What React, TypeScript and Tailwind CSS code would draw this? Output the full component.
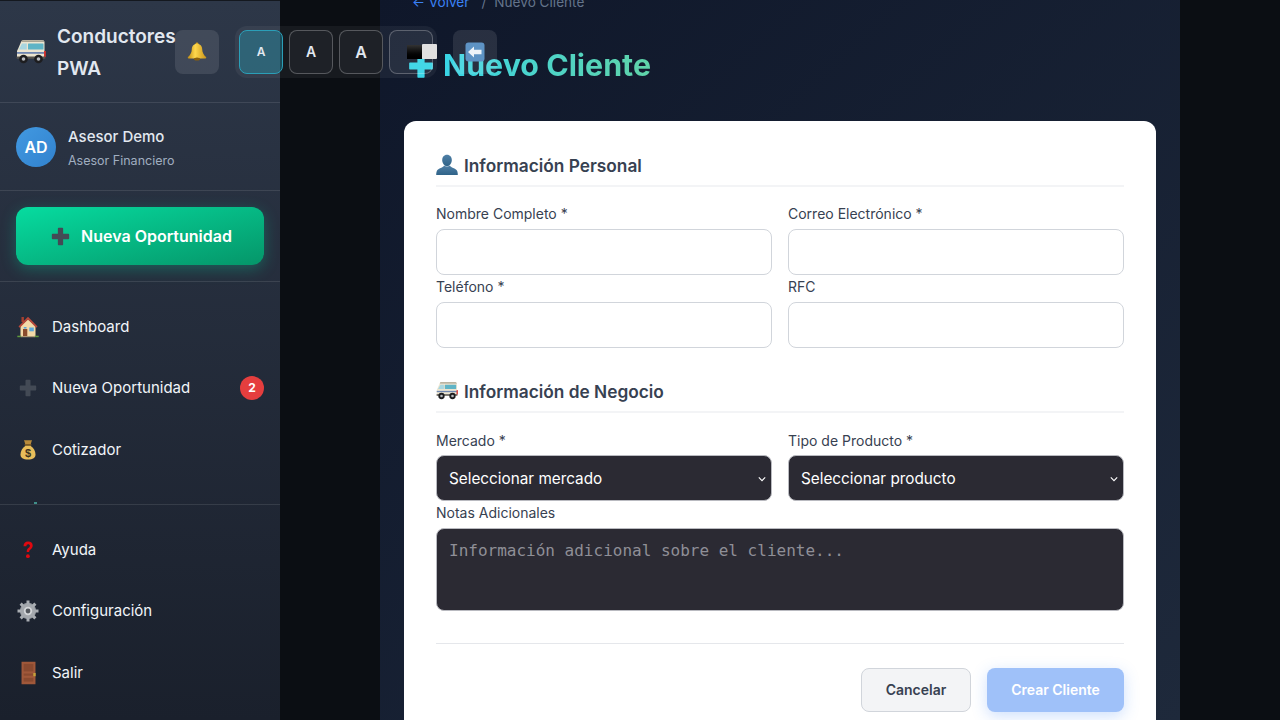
import * as React from 'react';

/* Emoji are not installed in this sandbox, so they are small inline drawings */
const VanIcon = ({ className }: { className?: string }) => (
  <svg viewBox="0 0 30 25" className={className}>
    <path d="M5 3C5.500 1.500 7 1 9 1h16.500c2 0 3 .8 3 2.500V19H1v-6.500c0-1 .4-1.800 1-2.600z" fill="#ece5d0" />
    <path d="M6 1.200h19.500c1.600 0 2.600.6 2.900 1.800H5.200c.2-1 .5-1.500.8-1.800z" fill="#a9a493" />
    <path d="M6 4.500h4.800v6H2.800z" fill="#a8d6e0" />
    <rect x="12" y="4.500" width="15.500" height="6" rx="0.600" fill="#5fb4c6" />
    <rect x="1" y="13" width="27.500" height="1.800" fill="#6f86b0" />
    <rect x="28" y="12" width="1.800" height="6" fill="#d8322d" />
    <rect x="0.500" y="17.500" width="29" height="2.200" rx="1" fill="#55534e" />
    <circle cx="7.500" cy="20" r="4.300" fill="#1d1d1f" />
    <circle cx="7.500" cy="20" r="1.800" fill="#b9bcc0" />
    <circle cx="22.500" cy="20" r="4.300" fill="#1d1d1f" />
    <circle cx="22.500" cy="20" r="1.800" fill="#b9bcc0" />
  </svg>
);

const BellIcon = ({ className }: { className?: string }) => (
  <svg viewBox="0 0 20 20" className={className}>
    <defs>
      <linearGradient id="bell" x1="0" y1="0" x2="1" y2="0">
        <stop offset="0" stopColor="#c08c14" />
        <stop offset="0.4" stopColor="#ffd84d" />
        <stop offset="1" stopColor="#c9941a" />
      </linearGradient>
    </defs>
    <circle cx="10" cy="1.800" r="1.400" fill="#d2a020" />
    <path d="M10 1.800c3.200 0 5 2.400 5.200 5.400.2 3 1 5.300 3.800 7.900.5.600.2 1.300-.6 1.300H1.600c-.8 0-1.100-.7-.6-1.300 2.800-2.600 3.600-4.900 3.800-7.900C5 4.200 6.800 1.800 10 1.800z" fill="url(#bell)" />
    <ellipse cx="10" cy="17" rx="3" ry="1.500" fill="#8a5f0c" />
  </svg>
);

const PlusIcon = ({ className, fill = '#434a55' }: { className?: string; fill?: string }) => (
  <svg viewBox="0 0 18 18" className={className}>
    <path d="M6.500 1.500c0-.4.3-.7.7-.7h3.600c.4 0 .7.3.7.7v5h5c.4 0 .7.3.7.7v3.600c0 .4-.3.700-.7.700h-5v5c0 .4-.3.700-.7.700H7.200c-.4 0-.7-.3-.7-.7v-5h-5c-.4 0-.7-.3-.7-.7V7.200c0-.4.3-.7.7-.7h5z" fill={fill} />
  </svg>
);

const HouseIcon = ({ className }: { className?: string }) => (
  <svg viewBox="0 0 22 22" className={className}>
    <rect x="4.500" y="1" width="2.400" height="5" fill="#a5402f" />
    <path d="M3.500 10 11 3.500l7.500 6.500v10.500h-15z" fill="#f3d9a8" />
    <path d="M11 .8 1.500 10.500l1.300 1.300L11 3.600l8.200 8.200 1.300-1.300z" fill="#b9483a" />
    <rect x="6" y="13" width="4.300" height="7.500" fill="#8a4b2c" />
    <rect x="12.300" y="11.500" width="4.500" height="3.800" fill="#5aa7dc" />
    <rect x="6.800" y="11" width="2.700" height="1.600" fill="#5aa7dc" />
    <rect x="0.300" y="19.700" width="4" height="1.500" fill="#5f9a3c" />
    <rect x="17.700" y="19.700" width="4" height="1.500" fill="#5f9a3c" />
    <rect x="4" y="20.200" width="14" height="1" fill="#b8a27c" />
  </svg>
);

const BagIcon = ({ className }: { className?: string }) => (
  <svg viewBox="0 0 18 22" className={className}>
    <path d="M5 1c1.300.8 2.600-.2 4 .3 1.400-.5 2.700.5 4-.3l-1.500 5h-5z" fill="#b88a3a" />
    <rect x="5.500" y="5" width="7" height="1.800" rx="0.800" fill="#7c5a22" />
    <path d="M6.500 6.800C3.500 9 1.500 12 1.500 15.500c0 3.500 2.500 5 7.500 5s7.500-1.500 7.500-5c0-3.500-2-6.500-5-8.700z" fill="#e8bd5a" />
    <text x="9" y="18" textAnchor="middle" fontSize="11" fontWeight="700" fontFamily="'Liberation Sans', sans-serif" fill="#3d3320">$</text>
  </svg>
);

const QuestionIcon = ({ className }: { className?: string }) => (
  <svg viewBox="0 0 14 20" className={className}>
    <path d="M2.500 6.300C2.500 3.300 4.300 1.600 7.100 1.600c2.800 0 4.600 1.600 4.600 4 0 1.900-1 2.900-2.200 3.900-1 .8-1.300 1.300-1.300 2.600H5.700c0-2.100.4-3 1.700-4.100 1-.8 1.500-1.300 1.500-2.200 0-.9-.7-1.500-1.700-1.500-1.100 0-1.800.8-1.800 2z" fill="#e0080f" />
    <circle cx="6.900" cy="16.200" r="1.900" fill="#e0080f" />
  </svg>
);

const GearIcon = ({ className }: { className?: string }) => (
  <svg viewBox="0 0 22 22" className={className}>
    <circle cx="11" cy="11" r="8.200" fill="#8d9298" />
    <g stroke="#a9adb2" strokeWidth="3">
      <line x1="11" y1="0.500" x2="11" y2="21.500" />
      <line x1="0.500" y1="11" x2="21.500" y2="11" />
      <line x1="3.600" y1="3.600" x2="18.400" y2="18.400" />
      <line x1="18.400" y1="3.600" x2="3.600" y2="18.400" />
    </g>
    <circle cx="11" cy="11" r="7.300" fill="#a4a8ad" />
    <circle cx="11" cy="11" r="4.200" fill="#d3d5d8" />
    <circle cx="11" cy="11" r="2.400" fill="#53575d" />
  </svg>
);

const DoorIcon = ({ className }: { className?: string }) => (
  <svg viewBox="0 0 14 22" className={className}>
    <rect x="0.500" y="0.500" width="13" height="21" fill="#a0583a" />
    <rect x="2.500" y="2.500" width="9" height="7" fill="#8a4a30" />
    <rect x="2.500" y="11.500" width="9" height="2" fill="#8a4a30" />
    <rect x="2.500" y="15.500" width="9" height="3.500" fill="#8a4a30" />
    <rect x="11.500" y="11" width="2.200" height="3" fill="#c5a23a" />
  </svg>
);

const PersonIcon = ({ className }: { className?: string }) => (
  <svg viewBox="0 0 22 22" className={className}>
    <defs>
      <linearGradient id="person" x1="0" y1="0" x2="0" y2="1">
        <stop offset="0" stopColor="#4f7fa6" />
        <stop offset="1" stopColor="#2f6388" />
      </linearGradient>
    </defs>
    <path d="M11 .8c3 0 4.800 2.300 4.800 5.200 0 3-2 6.200-4.800 6.200S6.200 9 6.200 6C6.200 3.100 8 .8 11 .8z" fill="url(#person)" />
    <path d="M8 11.500c-.2 2.200-6 2.500-7.200 5.500-.5 1.400-.6 2.800-.6 4h21.600c0-1.200-.1-2.600-.6-4-1.200-3-7-3.300-7.200-5.500-1.800 1.300-4.200 1.300-6 0z" fill="url(#person)" />
  </svg>
);

const BackIcon = ({ className }: { className?: string }) => (
  <svg viewBox="0 0 20 20" className={className}>
    <rect x="0.500" y="0.500" width="19" height="19" rx="3" fill="#5e93c4" />
    <path d="M9 4.500v3.200h7.500v4.600H9v3.200L3 10z" fill="#eef3f8" />
  </svg>
);

const NavItem = ({ icon, label, badge }: { icon: React.ReactNode; label: string; badge?: number }) => (
  <div className="flex h-[61.500px] items-center gap-3 px-4 text-[15px] font-normal text-[#f1f5f9]">
    <span className="flex w-6 shrink-0 items-center justify-center">{icon}</span>
    <span className="flex-1">{label}</span>
    {badge ? (
      <span className="flex h-6 w-6 items-center justify-center rounded-full bg-[#e53e3e] text-xs font-bold text-white">
        {badge}
      </span>
    ) : null}
  </div>
);

const Field = ({ label, children, tight }: { label: string; children: React.ReactNode; tight?: boolean }) => (
  <div className="flex flex-col">
    <label className={tight ? 'mb-1 h-5 text-sm font-normal leading-5 text-[#374151]' : 'mb-[5px] h-5 text-sm font-normal leading-5 text-[#374151]'}>
      {label}
    </label>
    {children}
  </div>
);

const TextInput = () => (
  <input type="text" className="h-[46px] w-full rounded-lg border border-[#d1d5db] bg-white px-3 text-base" />
);

const Select = ({ text }: { text: string }) => (
  <div className="relative">
    <select className="h-[46px] w-full appearance-none rounded-lg border border-[#b9bac0] bg-[#2b2a33] px-3 pt-[2px] text-[15.300px] text-white">
      <option>{text}</option>
    </select>
    <svg viewBox="0 0 10 6" className="pointer-events-none absolute right-[6px] top-[21px] h-[6px] w-[8px]" fill="none" stroke="#ffffff" strokeWidth="1.400">
      <path d="M1 1l4 4 4-4" />
    </svg>
  </div>
);

const SectionTitle = ({ icon, children }: { icon: React.ReactNode; children: React.ReactNode }) => (
  <h2 className="flex h-[34px] items-start gap-[6px] border-b-2 border-[#f3f4f6] pt-px text-[17.300px] font-semibold leading-6 text-[#374151]">
    {icon}
    {children}
  </h2>
);

export default function App() {
  return (
    <div className="relative flex h-[720px] w-full overflow-hidden bg-[#0b0e13] font-['Inter',sans-serif]">
      {/* Sidebar */}
      <aside className="flex h-full w-[280px] shrink-0 flex-col border-t border-[#14181f] bg-gradient-to-b from-[#2d3748] to-[#1a202c]">
        <div className="flex h-[102px] shrink-0 items-center gap-[11px] border-b border-white/10 px-4">
          <VanIcon className="h-[25px] w-[30px] shrink-0" />
          <div className="mt-[3px] w-[120px] text-[19px] leading-8 font-semibold text-[#e2e8f0]">Conductores PWA</div>
        </div>

        <div className="flex h-[88px] shrink-0 items-center gap-3 border-b border-white/10 px-4">
          <div className="flex h-10 w-10 items-center justify-center rounded-full bg-gradient-to-br from-[#4299e1] to-[#3182ce] text-base font-semibold text-white">
            AD
          </div>
          <div className="mt-[2px] flex flex-col gap-[6px]">
            <span className="text-[15px] font-medium leading-5 text-[#e2e8f0]">Asesor Demo</span>
            <span className="text-[12.500px] leading-4 text-[#a0aec0]">Asesor Financiero</span>
          </div>
        </div>

        <div className="flex h-[91px] shrink-0 items-center border-b border-white/10 px-4">
          <button className="flex h-[58px] w-full items-center justify-center gap-[11px] rounded-xl bg-gradient-to-br from-[#06dca0] to-[#059669] pl-[3px] text-base font-semibold text-white shadow-[0_4px_15px_rgba(6,214,160,0.3)]">
            <PlusIcon className="h-[19px] w-[19px]" />
            Nueva Oportunidad
          </button>
        </div>

        <nav className="h-[223px] shrink-0 overflow-hidden border-b border-white/10 pt-[14px]">
          <NavItem icon={<HouseIcon className="h-[22px] w-[22px]" />} label="Dashboard" />
          <NavItem icon={<PlusIcon className="h-[18px] w-[18px]" />} label="Nueva Oportunidad" badge={2} />
          <NavItem icon={<BagIcon className="h-[22px] w-[18px]" />} label="Cotizador" />
          <div className="flex h-[24px] items-start pl-[34px] pt-[21px]">
            <span className="h-[2px] w-[3px] bg-[#3f8f8a]" />
          </div>
        </nav>

        <div className="pt-[14px]">
          <NavItem icon={<QuestionIcon className="h-5 w-[14px]" />} label="Ayuda" />
          <NavItem icon={<GearIcon className="h-[22px] w-[22px]" />} label="Configuración" />
          <NavItem icon={<DoorIcon className="h-[24px] w-[15px]" />} label="Salir" />
        </div>
      </aside>

      {/* Main */}
      <main className="flex min-w-0 flex-1 justify-center">
        <div className="h-full w-[800px] bg-gradient-to-br from-[#0f172a] to-[#1e293b] px-6">
          <div className="-mt-2 flex h-5 items-center pl-2 text-[13.600px]">
            <span className="text-[#3b82f6]">← Volver</span>
            <span className="ml-[12px] text-[#64748b]">/</span>
            <span className="ml-[8px] text-[#64748b]">Nuevo Cliente</span>
          </div>

          <h1 className="mt-[34px] flex h-[40px] items-center gap-[9px] pl-1 text-[30.400px] font-bold">
            <PlusIcon className="h-[26px] w-[26px]" fill="#2fd3e6" />
            <span className="bg-gradient-to-r from-[#38d4e6] to-[#5fd3a8] bg-clip-text text-transparent">Nuevo Cliente</span>
          </h1>

          <div className="mt-[35px] rounded-xl bg-white p-8">
            <SectionTitle icon={<PersonIcon className="h-[22px] w-[22px]" />}>Información Personal</SectionTitle>
            <div className="mt-[17px] grid grid-cols-2 gap-x-4 gap-y-[2px]">
              <Field label="Nombre Completo *"><TextInput /></Field>
              <Field label="Correo Electrónico *"><TextInput /></Field>
              <Field label="Teléfono *"><TextInput /></Field>
              <Field label="RFC"><TextInput /></Field>
            </div>

            <div className="mt-[31px]">
              <SectionTitle icon={<VanIcon className="mt-[1px] h-[19px] w-[22px]" />}>Información de Negocio</SectionTitle>
            </div>
            <div className="mt-[18px] grid grid-cols-2 gap-x-4">
              <Field tight label="Mercado *"><Select text="Seleccionar mercado" /></Field>
              <Field tight label="Tipo de Producto *"><Select text="Seleccionar producto" /></Field>
            </div>
            <div className="mt-[2px]">
              <Field label="Notas Adicionales">
                <textarea
                  rows={3}
                  placeholder="Información adicional sobre el cliente..."
                  className="block h-[83px] w-full resize-none rounded-lg border border-[#b9bac0] bg-[#2b2a33] px-3 py-3 font-['DejaVu_Sans_Mono',monospace] text-base leading-[19px] text-white placeholder:text-[#8f8f97]"
                />
              </Field>
            </div>

            <div className="mt-8 flex justify-end gap-4 border-t border-[#e5e7eb] pt-6">
              <button className="h-11 w-[110px] rounded-lg border border-[#d1d5db] bg-[#f3f4f6] text-sm font-semibold text-[#374151]">
                Cancelar
              </button>
              <button className="h-11 w-[137px] rounded-lg bg-[#9fc1f9] text-sm font-semibold text-white shadow-[0_4px_15px_rgba(59,130,246,0.25)]">
                Crear Cliente
              </button>
            </div>
          </div>
        </div>
      </main>

      {/* Floating controls over the page */}
      <div className="absolute left-[175px] top-[26px] flex items-start gap-4">
        <button className="mt-1 flex h-11 w-11 items-center justify-center rounded-lg bg-white/10">
          <BellIcon className="h-5 w-5" />
        </button>
        <div className="flex gap-[6px] rounded-xl bg-white/5 p-1">
          <button className="flex h-11 w-11 items-center justify-center rounded-lg border border-[#2b9fb8] bg-[#22a5c0]/35 text-xs font-semibold text-[#e2e8f0]">A</button>
          <button className="flex h-11 w-11 items-center justify-center rounded-lg border border-white/25 bg-[#1e2127] text-sm font-semibold text-[#e2e8f0]">A</button>
          <button className="flex h-11 w-11 items-center justify-center rounded-lg border border-white/25 bg-[#1e2127] text-base font-semibold text-[#e2e8f0]">A</button>
          <button className="relative h-11 w-11 rounded-lg border border-white/25 bg-white/5">
            <span className="absolute left-[17px] top-[14px] h-[14px] w-[15px] bg-gradient-to-b from-[#333] to-black" />
            <span className="absolute left-[32px] top-[13px] h-[15px] w-[15px] rounded-[1px] bg-[#e0e0e0]" />
          </button>
        </div>
        <button className="mt-1 flex h-11 w-11 items-center justify-center rounded-lg bg-white/10">
          <BackIcon className="h-5 w-5" />
        </button>
      </div>
    </div>
  );
}
